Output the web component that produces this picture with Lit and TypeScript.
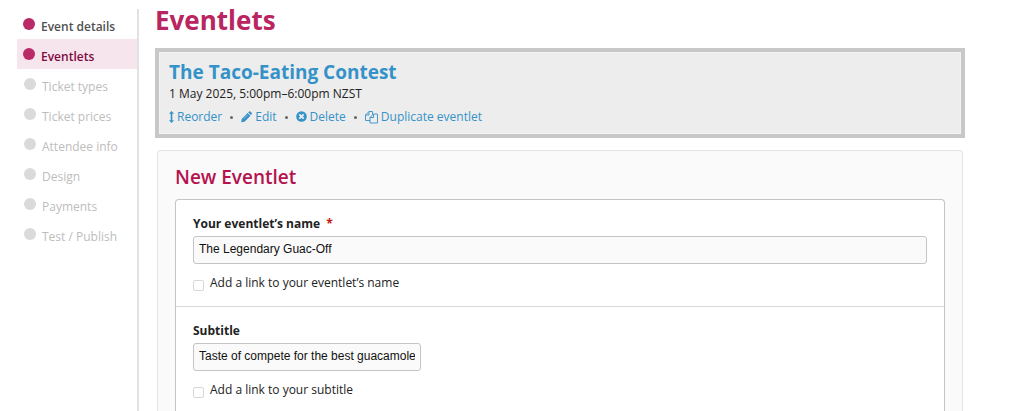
import { LitElement, html, css, svg } from "lit";
import { customElement, property } from "lit/decorators.js";

type StepState = "done" | "current" | "todo";

const steps: { label: string; state: StepState }[] = [
  { label: "Event details", state: "done" },
  { label: "Eventlets", state: "current" },
  { label: "Ticket types", state: "todo" },
  { label: "Ticket prices", state: "todo" },
  { label: "Attendee info", state: "todo" },
  { label: "Design", state: "todo" },
  { label: "Payments", state: "todo" },
  { label: "Test / Publish", state: "todo" },
];

const reorderIcon = svg`<svg width="5" height="12" viewBox="0 0 5 12" aria-hidden="true">
  <path fill="currentColor" d="M2.500 0 5 2.800H3.300v6.400H5L2.500 12 0 9.200h1.700V2.800H0z"/></svg>`;
const editIcon = svg`<svg width="11" height="12" viewBox="0 0 11 12" aria-hidden="true">
  <path fill="currentColor" d="M6.600 1.900 9.500 4.800 3.500 10.800 0.200 11.300 0.700 7.900z M7.200 1.400 8.100.5q.7-.5 1.300 0L10.800 1.900q.4.600 0 1.300L9.900 4.100z"/>
  <path stroke="#ededed" stroke-width=".5" fill="none" d="M2.800 7.700 6.600 3.900"/></svg>`;
const deleteIcon = svg`<svg width="11" height="12" viewBox="0 0 11 12" aria-hidden="true">
  <circle cx="5.500" cy="5.500" r="5.300" fill="currentColor"/>
  <path stroke="#ededed" stroke-width="1.900" d="M3.300 3.300 7.700 7.700M7.700 3.300 3.300 7.700"/></svg>`;
const copyIcon = svg`<svg width="13" height="13" viewBox="0 0 13 13" aria-hidden="true">
  <path fill="none" stroke="currentColor" stroke-width=".9" stroke-linejoin="round" d="M5 9.500H.5V4L4 .5H7.500V3.500M.5 4H4V.5M5 12V6.500L8.500 3H12.500V12ZM5 6.500H8.500V3"/></svg>`;

@customElement("step-nav")
class StepNav extends LitElement {
  static styles = css`
    :host {
      display: block;
      border-right: 2px solid #e2e2e2;
      margin-top: 9px;
    }
    .list {
      list-style: none;
      margin: 0;
      padding: 0;
    }
    .link {
      display: flex;
      align-items: center;
      gap: 6px;
      height: 30px;
      padding-left: 7px;
      color: #bdbdbd;
      text-decoration: none;
      font-size: 12px;
      line-height: 18px;
      white-space: nowrap;
    }
    .dot {
      width: 12px;
      height: 12px;
      border-radius: 50%;
      background: #dadada;
    }
    .label {
      padding-top: 6px;
    }
    .done,
    .current {
      padding-left: 6px;
      color: #505050;
      font-weight: 600;
    }
    .done .dot,
    .current .dot {
      background: #b92a66;
    }
    .current {
      background: #f7e5ed;
      color: #7d0b41;
    }
  `;
  render() {
    return html`<nav aria-label="Steps">
      <ul class="list">
        ${steps.map(
          (s) => html`<li>
            <a class="link ${s.state}" href="#"><span class="dot"></span><span class="label">${s.label}</span></a>
          </li>`
        )}
      </ul>
    </nav>`;
  }
}

@customElement("eventlet-card")
class EventletCard extends LitElement {
  static styles = css`
    :host {
      display: block;
      border: 4px solid #c8c8c8;
      box-shadow: inset 0 0 0 1px #f3f3f3;
      background: #ededed;
      padding: 8px 10px 7px;
      color: #222;
      font-size: 12px;
      line-height: 20px;
    }
    .title {
      margin: 0;
      font-size: 19px;
      line-height: 24px;
      font-weight: 700;
    }
    .when {
      margin: 0;
    }
    .actions {
      display: flex;
      align-items: center;
      gap: 8px;
      margin-top: 3px;
    }
    .link {
      display: flex;
      align-items: center;
      gap: 3px;
      color: #3492c8;
      text-decoration: none;
    }
    .heading-link {
      color: #3492c8;
      text-decoration: none;
    }
    .sep {
      width: 3px;
      height: 3px;
      border-radius: 50%;
      background: #666;
    }
  `;
  render() {
    const sep = html`<span class="sep"></span>`;
    return html`
      <h2 class="title"><a class="heading-link" href="#">The Taco-Eating Contest</a></h2>
      <p class="when">1 May 2025, 5:00pm–6:00pm NZST</p>
      <div class="actions">
        <a class="link" href="#">${reorderIcon}Reorder</a>${sep}
        <a class="link" href="#">${editIcon}Edit</a>${sep}
        <a class="link" href="#">${deleteIcon}Delete</a>${sep}
        <a class="link" href="#">${copyIcon}Duplicate eventlet</a>
      </div>
    `;
  }
}

@customElement("linked-field")
class LinkedField extends LitElement {
  @property() label = "";
  @property() value = "";
  @property() linkLabel = "";
  @property({ type: Boolean }) required = false;
  @property({ type: Boolean }) short = false;

  static styles = css`
    :host {
      display: block;
      padding: 15px 17px 14px;
      font-size: 12px;
      line-height: 18px;
      color: #222;
    }
    .label {
      display: block;
      font-weight: 700;
      margin-bottom: 3px;
    }
    .star {
      color: #c0180c;
      margin-left: 3px;
    }
    .text {
      display: block;
      box-sizing: border-box;
      width: 100%;
      height: 28px;
      padding: 0 5px 2px;
      border: 1px solid #c4c4c4;
      border-radius: 3px;
      background: #fafafa;
      color: #111;
      font: 12px "Liberation Sans", Arial, sans-serif;
    }
    .short {
      width: 228px;
    }
    .check {
      display: flex;
      align-items: center;
      gap: 6px;
      margin-top: 10px;
    }
    .box {
      appearance: none;
      box-sizing: border-box;
      width: 11px;
      height: 11px;
      margin: 5px 0 0;
      border: 1px solid #d8d8d8;
      border-radius: 2px;
      background: #fff;
    }
  `;
  render() {
    return html`
      <label class="label" for="text">${this.label}${this.required ? html` <span class="star">*</span>` : ""}</label>
      <input class="text ${this.short ? "short" : ""}" id="text" type="text" .value=${this.value} />
      <div class="check">
        <input class="box" id="link" type="checkbox" /><label for="link">${this.linkLabel}</label>
      </div>
    `;
  }
}

@customElement("app-root")
class AppRoot extends LitElement {
  static styles = css`
    :host {
      display: grid;
      grid-template-columns: 122px minmax(0, 1fr);
      column-gap: 16px;
      box-sizing: border-box;
      min-height: 100vh;
      padding: 0 59px 0 17px;
      background: #fff;
      font-family: "Open Sans", "Noto Sans", sans-serif;
    }
    .main {
      display: flex;
      flex-direction: column;
    }
    .page-title {
      margin: 4px 0 12px;
      color: #b92560;
      font-size: 26px;
      line-height: 32px;
      font-weight: 700;
    }
    .panel {
      flex: 1;
      display: flex;
      flex-direction: column;
      margin: 12px 2px 0;
      padding: 13px 17px 0;
      border: 1px solid #e4e4e4;
      border-bottom: 0;
      border-radius: 4px 4px 0 0;
      background: #fafafa;
    }
    .panel-title {
      margin: 0 0 9px;
      color: #b5124f;
      font-size: 19px;
      line-height: 26px;
      font-weight: 600;
    }
    .fields {
      flex: 1;
      border: 1px solid #c4c4c4;
      border-bottom: 0;
      border-radius: 4px 4px 0 0;
      background: #fff;
    }
    .divided {
      border-top: 1px solid #d8d8d8;
    }
  `;
  render() {
    return html`
      <step-nav></step-nav>
      <main class="main">
        <h1 class="page-title">Eventlets</h1>
        <eventlet-card></eventlet-card>
        <section class="panel">
          <h2 class="panel-title">New Eventlet</h2>
          <form class="fields">
            <linked-field
              label="Your eventlet’s name"
              value="The Legendary Guac-Off"
              .linkLabel=${"Add a link to your eventlet’s name"}
              required
            ></linked-field>
            <linked-field
              class="divided"
              label="Subtitle"
              value="Taste of compete for the best guacamole"
              .linkLabel=${"Add a link to your subtitle"}
              short
            ></linked-field>
          </form>
        </section>
      </main>
    `;
  }
}
